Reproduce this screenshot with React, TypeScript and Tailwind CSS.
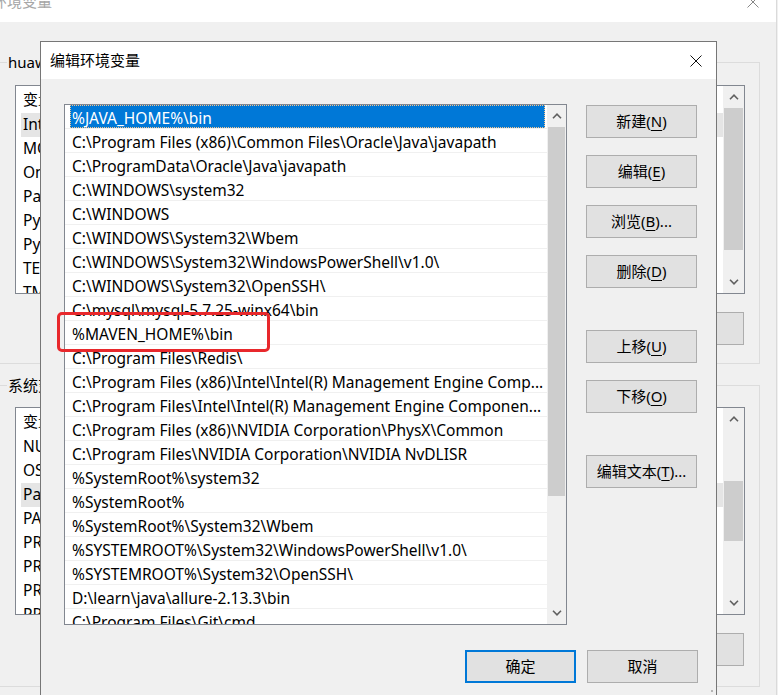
import type { ReactNode } from "react";

const pathRows = [
  "%JAVA_HOME%\\bin",
  "C:\\Program Files (x86)\\Common Files\\Oracle\\Java\\javapath",
  "C:\\ProgramData\\Oracle\\Java\\javapath",
  "C:\\WINDOWS\\system32",
  "C:\\WINDOWS",
  "C:\\WINDOWS\\System32\\Wbem",
  "C:\\WINDOWS\\System32\\WindowsPowerShell\\v1.0\\",
  "C:\\WINDOWS\\System32\\OpenSSH\\",
  "C:\\mysql\\mysql-5.7.25-winx64\\bin",
  "%MAVEN_HOME%\\bin",
  "C:\\Program Files\\Redis\\",
  "C:\\Program Files (x86)\\Intel\\Intel(R) Management Engine Comp...",
  "C:\\Program Files\\Intel\\Intel(R) Management Engine Componen...",
  "C:\\Program Files (x86)\\NVIDIA Corporation\\PhysX\\Common",
  "C:\\Program Files\\NVIDIA Corporation\\NVIDIA NvDLISR",
  "%SystemRoot%\\system32",
  "%SystemRoot%",
  "%SystemRoot%\\System32\\Wbem",
  "%SYSTEMROOT%\\System32\\WindowsPowerShell\\v1.0\\",
  "%SYSTEMROOT%\\System32\\OpenSSH\\",
  "D:\\learn\\java\\allure-2.13.3\\bin",
  "C:\\Program Files\\Git\\cmd",
];

const userVars = ["IntelliJ IDEA", "MOZ_PLUGIN_PATH", "OneDrive", "Path", "PyCharm", "PyCharm Community Edition", "TEMP", "TMP"];
const systemVars = [
  "NUMBER_OF_PROCESSORS",
  "OS",
  "Path",
  "PATHEXT",
  "PROCESSOR_ARCHITECTURE",
  "PROCESSOR_IDENTIFIER",
  "PROCESSOR_LEVEL",
  "PROCESSOR_REVISION",
];

function Chevron({ up }: { up?: boolean }) {
  return (
    <svg width="10" height="6" viewBox="0 0 10 6" className="text-[#606060]">
      <polyline points={up ? "1,5.2 5,1.2 9,5.2" : "1,0.8 5,4.8 9,0.8"} fill="none" stroke="currentColor" strokeWidth="1.6" />
    </svg>
  );
}

function CloseX({ className }: { className?: string }) {
  return (
    <svg width="12" height="12" viewBox="0 0 12 12" className={className}>
      <path d="M0.5 0.5 L11.5 11.5 M11.5 0.5 L0.5 11.5" stroke="#111" strokeWidth="1" fill="none" />
    </svg>
  );
}

// scrollbar: thumbTop / thumbHeight measured from the top of the track (below the up arrow)
function ScrollBar({ width, thumbTop, thumbHeight }: { width: string; thumbTop: number; thumbHeight: number }) {
  return (
    <div className={`flex h-full shrink-0 flex-col bg-[#f0f0f0] ${width}`}>
      <div className="flex h-[22px] shrink-0 items-center justify-center">
        <Chevron up />
      </div>
      <div className="relative flex-1">
        <div className="absolute inset-x-[1px] bg-[#cdcdcd]" style={{ top: thumbTop, height: thumbHeight }} />
      </div>
      <div className="flex h-[23px] shrink-0 items-center justify-center">
        <Chevron />
      </div>
    </div>
  );
}

function WinButton({ children, primary, className }: { children: ReactNode; primary?: boolean; className?: string }) {
  return (
    <button
      type="button"
      className={`flex h-[33px] w-[111px] shrink-0 items-center justify-center bg-[#e1e1e1] leading-none ${
        primary ? "border-2 border-[#0078d7]" : "border border-[#adadad]"
      } ${className ?? ""}`}
    >
      {children}
    </button>
  );
}

function Key({ k }: { k: string }) {
  return <span className="underline underline-offset-[3px]">{k}</span>;
}

function VarList({ names, active, thumbTop, thumbHeight, height }: { names: string[]; active: number; thumbTop: number; thumbHeight: number; height: string }) {
  return (
    <div className={`flex w-full overflow-hidden border border-[#828790] bg-white ${height}`}>
      <div className="flex-1 overflow-hidden">
        <div className="flex h-[27px] items-center pl-[7px]">变量</div>
        {names.map((n, i) => (
          <div key={n + i} className={`ml-[5px] flex h-[24px] items-center whitespace-nowrap pl-[2px] text-[15.5px] ${i === active ? "bg-[#e5e5e5]" : ""}`}>
            {n}
          </div>
        ))}
      </div>
      <ScrollBar width="w-[21px]" thumbTop={thumbTop} thumbHeight={thumbHeight} />
    </div>
  );
}

function GroupBox({ label, children, className }: { label: string; children: ReactNode; className?: string }) {
  return (
    <fieldset className={`-ml-[6px] h-[312px] w-[766px] shrink-0 border border-[#dcdcdc] ${className ?? ""}`}>
      <legend className="ml-[12px] px-[1px] leading-[20px]">{label}</legend>
      <div className="flex flex-col pl-[20px] pr-[14px]">{children}</div>
    </fieldset>
  );
}

export default function App() {
  return (
    <div className="relative h-[695px] w-[778px] overflow-hidden bg-[#f0f0f0] font-['Noto_Sans','Noto_Sans_CJK_SC',sans-serif] text-[15px] text-black">
      {/* window behind: 环境变量 */}
      <div className="flex h-full w-[777px] flex-col border-r border-[#dadada]">
        <div className="flex h-[22px] shrink-0 items-start justify-between overflow-hidden bg-white">
          <span className="-ml-[8px] -mt-[9px] leading-[20px] text-[#a6a6a6]">环境变量</span>
          <CloseX className="-mt-[4px] mr-[17px] opacity-50" />
        </div>
        <div className="flex flex-col pt-[30px]">
          <GroupBox label="huawei 的用户变量">
            <div className="mt-[13px]">
              <VarList names={userVars} active={0} thumbTop={0} thumbHeight={142} height="h-[209px]" />
            </div>
            <div className="mr-[1px] mt-[18px] flex justify-end gap-[10px]">
              <WinButton className="h-[32px] w-[90px]">新建(<Key k="N" />)...</WinButton>
              <WinButton className="h-[32px] w-[90px]">编辑(<Key k="E" />)...</WinButton>
              <WinButton className="h-[32px] w-[90px]">删除(<Key k="D" />)</WinButton>
            </div>
          </GroupBox>
          <GroupBox label="系统变量" className="mt-[11px]">
            <div className="mt-[12px]">
              <VarList names={systemVars} active={2} thumbTop={51} thumbHeight={60} height="h-[208px]" />
            </div>
            <div className="mr-[1px] mt-[18px] flex justify-end gap-[10px]">
              <WinButton className="h-[32px] w-[90px]">新建(<Key k="W" />)...</WinButton>
              <WinButton className="h-[32px] w-[90px]">编辑(<Key k="I" />)...</WinButton>
              <WinButton className="h-[32px] w-[90px]">删除(<Key k="L" />)</WinButton>
            </div>
          </GroupBox>
        </div>
      </div>

      {/* dialog: 编辑环境变量 */}
      <div className="absolute left-[40px] top-[41px] flex h-[657px] w-[677px] flex-col border border-[#767676] bg-[#f0f0f0]">
        <div className="flex h-[37px] shrink-0 items-center justify-between bg-white pl-[9px] pr-[14px]">
          <span>编辑环境变量</span>
          <CloseX />
        </div>
        <div className="flex flex-col pl-[23px] pr-[18px] pt-[25px]">
          <div className="flex gap-[19px]">
            <div className="flex h-[521px] w-[503px] overflow-hidden border border-[#828790] bg-white">
              <div className="flex-1 overflow-hidden">
                {pathRows.map((row, i) => (
                  <div key={row} className="h-[24px] border-b border-[#f0f0f0]">
                    <div
                      className={`ml-[5px] mr-[2px] flex h-full items-center overflow-hidden whitespace-nowrap pl-[2px] pt-[4px] text-[15.5px] ${
                        i === 0 ? "bg-[#0078d7] text-white outline-1 -outline-offset-1 outline-dotted outline-[#f2c48f]" : ""
                      }`}
                    >
                      {row}
                    </div>
                  </div>
                ))}
              </div>
              <ScrollBar width="w-[19px]" thumbTop={0} thumbHeight={369} />
            </div>
            <div className="flex w-[111px] flex-col pt-[1px]">
              <WinButton>新建(<Key k="N" />)</WinButton>
              <WinButton className="mt-[17px]">编辑(<Key k="E" />)</WinButton>
              <WinButton className="mt-[17px]">浏览(<Key k="B" />)...</WinButton>
              <WinButton className="mt-[17px]">删除(<Key k="D" />)</WinButton>
              <WinButton className="mt-[42px]">上移(<Key k="U" />)</WinButton>
              <WinButton className="mt-[17px]">下移(<Key k="O" />)</WinButton>
              <WinButton className="mt-[42px]">编辑文本(<Key k="T" />)...</WinButton>
            </div>
          </div>
          <div className="mt-[25px] flex justify-end gap-[11px]">
            <WinButton primary>确定</WinButton>
            <WinButton>取消</WinButton>
          </div>
        </div>
        <div className="absolute bottom-[5px] right-[3px] h-[2px] w-[2px] bg-[#b5b5b5]" />
      </div>

      {/* red annotation around the new entry */}
      <div className="absolute left-[57px] top-[312px] h-[40px] w-[213px] rounded-[5px] border-[3px] border-[#e8282c]" />
    </div>
  );
}
